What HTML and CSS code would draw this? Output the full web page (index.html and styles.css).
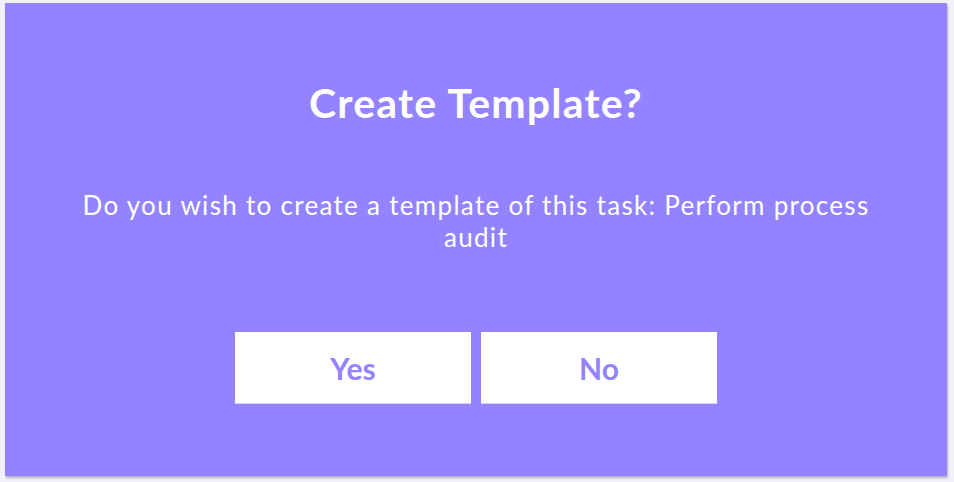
FILE: index.html
```html
<!DOCTYPE html>
<html lang="en">

<head>
    <meta charset="UTF-8">
    <meta name="viewport" content="width=device-width, initial-scale=1.0">
    <title>Create Template?</title>
    <link rel="stylesheet" href="styles.css">
</head>

<body>
    <div class="modal">
        <h1 class="modal-title">Create Template?</h1>
        <p class="modal-text">Do you wish to create a template of this task: Perform process audit</p>
        <div class="modal-actions">
            <button class="btn">Yes</button>
            <button class="btn">No</button>
        </div>
    </div>
</body>

</html>
```

FILE: styles.css
```css
* {
    margin: 0;
    padding: 0;
    box-sizing: border-box;
}

body {
    background: #f1f0fb;
    padding: 3px 7px 6px 5px;
    font-family: Lato, "Open Sans", sans-serif;
}

.modal {
    display: flex;
    flex-direction: column;
    align-items: center;
    width: 942px;
    height: 473px;
    padding: 72px 60px 0;
    background: #9483ff;
    box-shadow: 1px 2px 2px rgba(0, 0, 0, 0.25);
    color: #fff;
    text-align: center;
}

.modal-title {
    font-size: 41px;
    font-weight: 700;
    line-height: 56px;
    letter-spacing: 1.2px;
}

.modal-text {
    margin-top: 58px;
    font-size: 26px;
    line-height: 32px;
    letter-spacing: 1.3px;
}

.modal-actions {
    display: flex;
    gap: 10px;
    margin-top: 79px;
}

.btn {
    width: 236px;
    height: 72px;
    border: none;
    border-bottom: 1px solid #d8d2ff;
    background: #fff;
    color: #9483ff;
    font-family: inherit;
    font-size: 30px;
    font-weight: 700;
    cursor: pointer;
}
```
